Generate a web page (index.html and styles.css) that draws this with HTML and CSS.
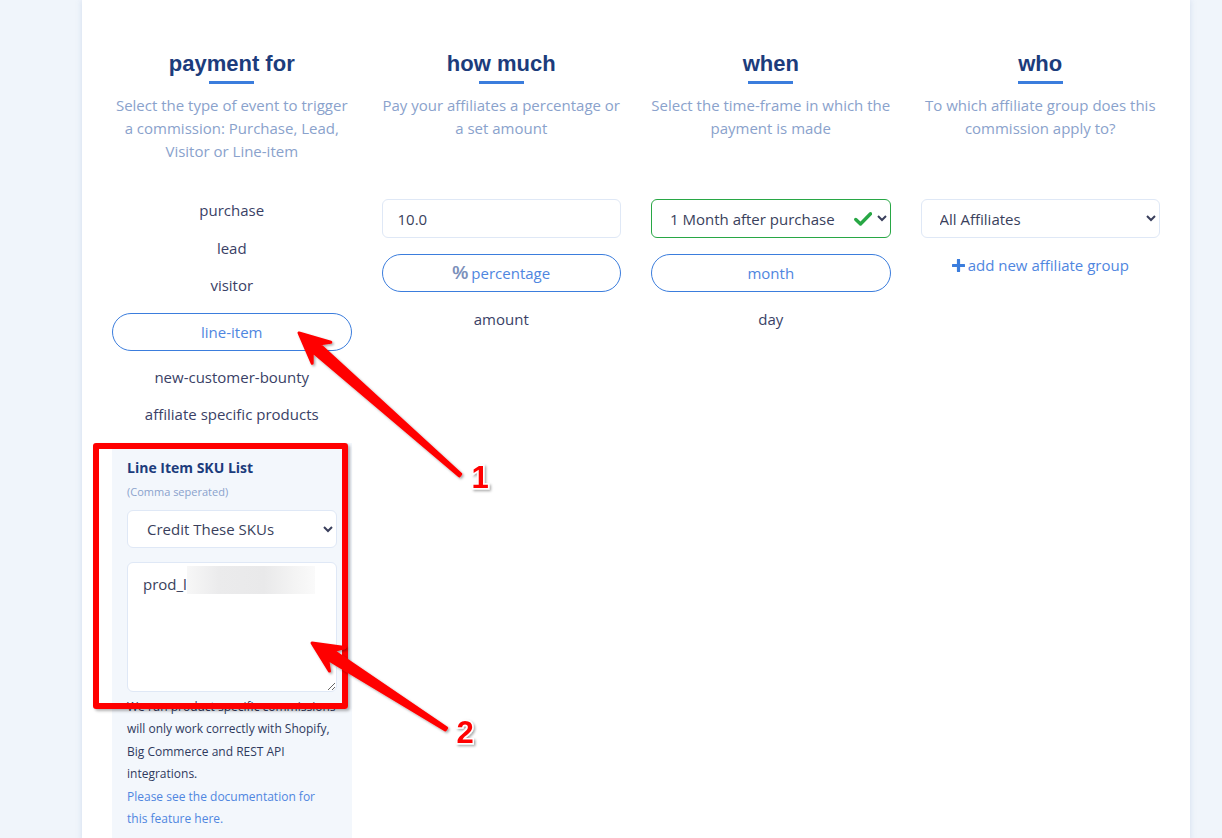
FILE: index.html
```html
<!DOCTYPE html>
<html lang="en">
<head>
    <meta charset="UTF-8">
    <meta name="viewport" content="width=device-width, initial-scale=1.0">
    <title>Commission Settings</title>
    <link rel="stylesheet" href="styles.css">
</head>
<body>
    <div class="card">
        <div class="columns">
            <!-- payment for -->
            <div class="column">
                <h2 class="col-title">payment for</h2>
                <p class="col-desc">Select the type of event to trigger a commission: Purchase, Lead, Visitor or Line-item</p>
                <div class="options options-list">
                    <div class="option">purchase</div>
                    <div class="option">lead</div>
                    <div class="option">visitor</div>
                    <div class="pill">line-item</div>
                    <div class="option">new-customer-bounty</div>
                    <div class="option">affiliate specific products</div>
                </div>
                <div class="sku-panel">
                    <div class="sku-title">Line Item SKU List</div>
                    <div class="sku-sub">(Comma seperated)</div>
                    <select class="field select sku-select">
                        <option>Credit These SKUs</option>
                    </select>
                    <div class="sku-box">
                        <textarea class="field sku-text">prod_l</textarea>
                        <span class="redact"></span>
                    </div>
                    <p class="sku-help">
                        We run product specific commissions<br>
                        will only work correctly with Shopify,<br>
                        Big Commerce and REST API<br>
                        integrations.<br>
                        <a href="#" class="sku-link">Please see the documentation for<br>this feature here.</a>
                    </p>
                </div>
            </div>

            <!-- how much -->
            <div class="column">
                <h2 class="col-title">how much</h2>
                <p class="col-desc">Pay your affiliates a percentage or a set amount</p>
                <div class="options">
                    <input class="field" type="text" value="10.0">
                    <div class="pill pill-gap"><span class="pct">%</span>percentage</div>
                    <div class="option">amount</div>
                </div>
            </div>

            <!-- when -->
            <div class="column">
                <h2 class="col-title">when</h2>
                <p class="col-desc">Select the time-frame in which the payment is made</p>
                <div class="options">
                    <div class="select-wrap">
                        <select class="field select valid">
                            <option>1 Month after purchase</option>
                        </select>
                        <svg class="check" width="18" height="14" viewBox="0 0 18 14">
                            <path d="M1.8 7.5 L6.5 12 L16.5 1.8" fill="none" stroke="#28a745" stroke-width="3.4" stroke-linecap="round" stroke-linejoin="round"/>
                        </svg>
                    </div>
                    <div class="pill pill-gap">month</div>
                    <div class="option">day</div>
                </div>
            </div>

            <!-- who -->
            <div class="column">
                <h2 class="col-title">who</h2>
                <p class="col-desc">To which affiliate group does this commission apply to?</p>
                <div class="options">
                    <select class="field select">
                        <option>All Affiliates</option>
                    </select>
                    <a href="#" class="add-group">
                        <svg width="13" height="13" viewBox="0 0 13 13">
                            <path d="M6.5 1 V12 M1 6.5 H12" stroke="#3b7ddd" stroke-width="3.2" stroke-linecap="round"/>
                        </svg>
                        add new affiliate group
                    </a>
                </div>
            </div>
        </div>
    </div>

    <!-- annotations drawn over the screenshot -->
    <div class="mark-box"></div>
    <svg class="marks" width="1222" height="838" viewBox="0 0 1222 838">
        <defs>
            <filter id="shade" x="-10%" y="-10%" width="130%" height="130%">
                <feDropShadow dx="1.5" dy="1.5" stdDeviation="1.2" flood-color="#000" flood-opacity="0.35"/>
            </filter>
        </defs>
        <g fill="#ff0000" stroke="#ff0000" stroke-width="3" stroke-linejoin="round" filter="url(#shade)">
            <polygon points="299,333 330.8,342.3 318.8,343.9 460.8,474.1 459.2,475.9 312.2,351.4 312.2,363.3"/>
            <polygon points="312,643 344.8,647.6 333.2,650.8 446.7,728.0 445.3,730.0 327.7,659.2 329.5,671.1"/>
        </g>
        <g class="mark-num" filter="url(#shade)">
            <text x="480" y="488">1</text>
            <text x="465" y="743">2</text>
        </g>
    </svg>
</body>
</html>
```

FILE: styles.css
```css
/* Commission settings page */
body {
    margin: 0;
    background-color: #f0f5fb;
    font-family: "Open Sans", Arial, sans-serif;
    color: #3a3f66;
    height: 838px;
    overflow: hidden;
    position: relative;
}
.card {
    margin-left: 82px;
    width: 1108px;
    min-height: 838px;
    background-color: #fff;
    box-shadow: 0 0 6px rgba(120, 150, 200, 0.25);
    box-sizing: border-box;
    padding: 51px 30px 0 30px;
}
.columns {
    display: grid;
    grid-template-columns: repeat(4, 1fr);
    column-gap: 30px;
}
.column {
    display: flex;
    flex-direction: column;
    text-align: center;
}
.col-title {
    margin: 0;
    font-family: "Liberation Sans", Arial, sans-serif;
    font-weight: bold;
    font-size: 22px;
    line-height: 26px;
    color: #1c3c7c;
}
.col-title::after {
    content: "";
    display: block;
    width: 45px;
    height: 3px;
    margin: 4px auto 0 auto;
    background-color: #3b7ddd;
}
.col-desc {
    margin: 10px 0 0 0;
    height: 69px;
    font-size: 15px;
    line-height: 23px;
    color: #8aa2cc;
}
.options {
    margin-top: 36px;
    display: flex;
    flex-direction: column;
}
.options-list {
    margin-top: 29px;
}
.option {
    padding: 8px 0;
    line-height: 21.5px;
    font-size: 15px;
    color: #3a3f66;
}
.pill {
    height: 38px;
    box-sizing: border-box;
    margin: 8px 0;
    border: 1px solid #3b7ddd;
    border-radius: 19px;
    display: flex;
    align-items: center;
    justify-content: center;
    font-size: 15px;
    color: #4f86e0;
}
.pill-gap {
    margin-top: 16px;
    margin-bottom: 9px;
}
.pct {
    font-family: "Liberation Sans", Arial, sans-serif;
    font-weight: bold;
    font-size: 18px;
    color: #7b90ba;
    margin-right: 3px;
}
.field {
    height: 39px;
    box-sizing: border-box;
    border: 1px solid #dfe8f6;
    border-radius: 6px;
    background-color: #fff;
    padding: 0 15px;
    font-family: "Open Sans", Arial, sans-serif;
    font-size: 15px;
    color: #3a3f5c;
    width: 100%;
    outline: none;
}
.select {
    padding-left: 14px;
}
.select-wrap {
    position: relative;
}
.valid {
    border-color: #28a745;
}
.check {
    position: absolute;
    right: 19px;
    top: 13px;
    background-color: #fff;
}
.add-group {
    margin-top: 16px;
    font-size: 15px;
    line-height: 22px;
    color: #4f86e0;
    text-decoration: none;
    display: flex;
    justify-content: center;
    align-items: center;
    gap: 3px;
}

/* SKU panel under the event list */
.sku-panel {
    margin-top: 9px;
    background-color: #f3f7fc;
    padding: 15px 15px 10px 15px;
    text-align: left;
}
.sku-title {
    font-size: 14px;
    line-height: 20px;
    font-weight: bold;
    color: #1c3c7c;
}
.sku-sub {
    margin-top: 6px;
    font-size: 11px;
    line-height: 16px;
    color: #8aa2cc;
}
.sku-select {
    margin-top: 10px;
    height: 38px;
    padding-left: 15px;
}
.sku-box {
    position: relative;
    margin-top: 14px;
}
.sku-text {
    display: block;
    height: 130px;
    padding: 10px 15px;
    line-height: 22px;
    resize: vertical;
}
.redact {
    position: absolute;
    left: 60px;
    top: 4px;
    width: 128px;
    height: 28px;
    background: linear-gradient(90deg, #f7f7f7, #ebebec 25%, #e9e9ea 60%, #f4f4f4 85%, #fafafa);
}
.sku-help {
    margin: 4px 0 0 0;
    white-space: nowrap;
    font-size: 12px;
    line-height: 22.6px;
    color: #2f3a5e;
}
.sku-link {
    color: #4f86e0;
    text-decoration: none;
}

/* annotation overlay */
.mark-box {
    position: absolute;
    left: 93px;
    top: 443px;
    width: 255px;
    height: 266px;
    box-sizing: border-box;
    border: 6px solid #ff0000;
    border-radius: 3px;
    box-shadow: 2px 2px 3px rgba(0, 0, 0, 0.3);
}
.marks {
    position: absolute;
    left: 0;
    top: 0;
    pointer-events: none;
}
.mark-num text {
    font-family: "Liberation Sans", Arial, sans-serif;
    font-weight: bold;
    font-size: 31px;
    text-anchor: middle;
    fill: #ff0000;
    stroke: #fff;
    stroke-width: 3px;
    paint-order: stroke;
}
```
